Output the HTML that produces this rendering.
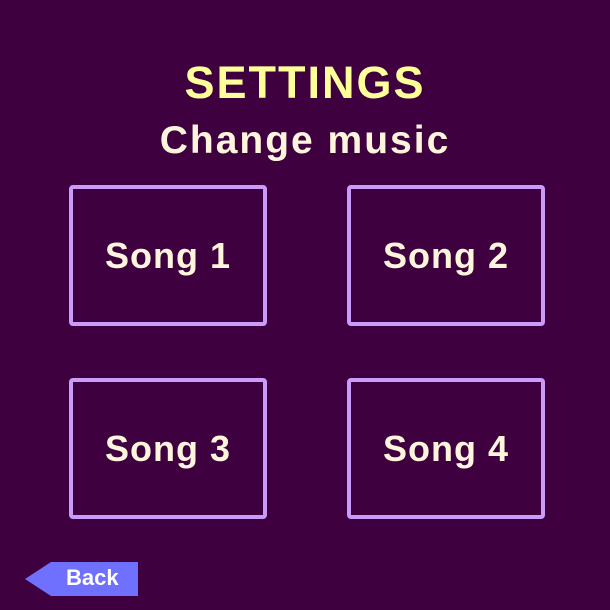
<!DOCTYPE html>
<html><head><style>
body{margin:0;width:610px;height:610px;background:#3f0040;position:relative;overflow:hidden;font-family:"Liberation Sans",sans-serif;font-weight:bold}
.t{position:absolute;left:0;width:610px;text-align:center}
.b{position:absolute;width:190px;height:133px;border:4px solid #c89cf8;border-radius:4px;box-sizing:content-box;display:flex;align-items:center;justify-content:center;color:#fff5dc;font-size:36px;letter-spacing:1px}
</style></head><body>
<div class="t" style="top:57px;font-size:45px;color:#ffff99;letter-spacing:2px">SETTINGS</div>
<div class="t" style="top:119px;font-size:39px;color:#fff5dc;letter-spacing:2px">Change music</div>
<div class="b" style="left:69px;top:185px">Song 1</div>
<div class="b" style="left:347px;top:185px">Song 2</div>
<div class="b" style="left:69px;top:378px">Song 3</div>
<div class="b" style="left:347px;top:378px">Song 4</div>
<svg style="position:absolute;left:0;top:0" width="610" height="610"><polygon points="25,579 51,562 138,562 138,596 51,596" fill="#7070ff"/></svg>
<div style="position:absolute;left:66px;top:565px;font-size:22px;color:#fff">Back</div>
</body></html>
